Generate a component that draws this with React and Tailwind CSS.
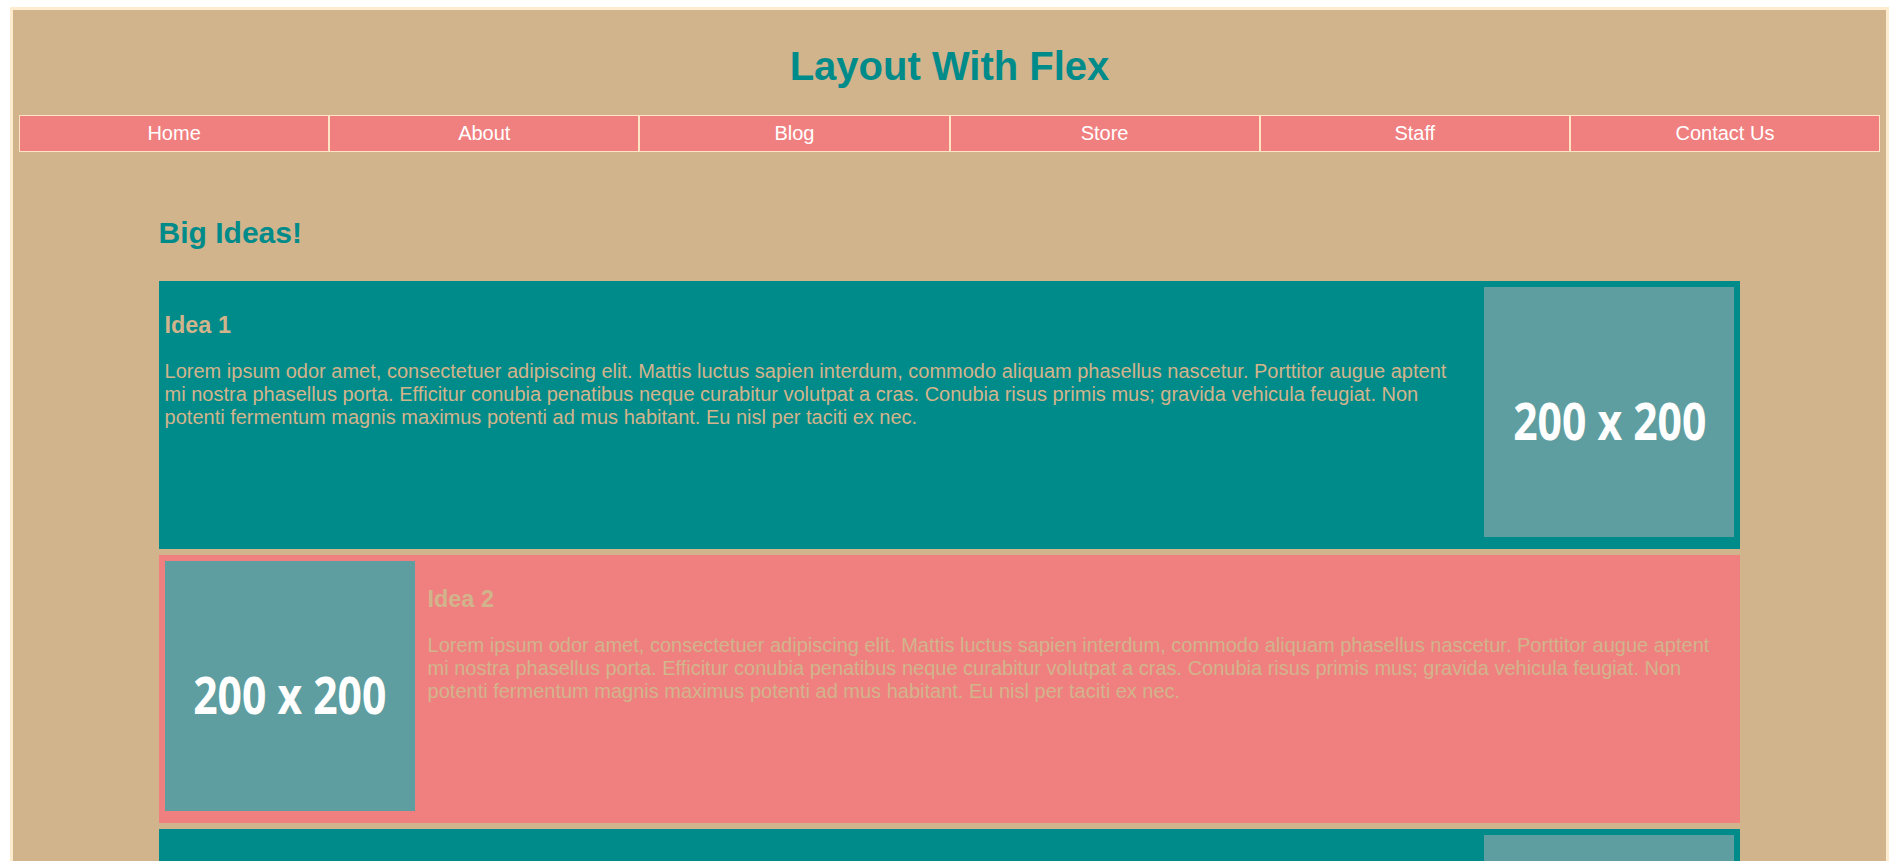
const NAV = ['Home', 'About', 'Blog', 'Store', 'Staff', 'Contact Us']

const LOREM =
  'Lorem ipsum odor amet, consectetuer adipiscing elit. Mattis luctus sapien interdum, commodo aliquam phasellus nascetur. Porttitor augue aptent mi nostra phasellus porta. Efficitur conubia penatibus neque curabitur volutpat a cras. Conubia risus primis mus; gravida vehicula feugiat. Non potenti fermentum magnis maximus potenti ad mus habitant. Eu nisl per taciti ex nec.'

const IDEAS = [
  { title: 'Idea 1', bg: 'bg-[#008b8b]', imageLeft: false },
  { title: 'Idea 2', bg: 'bg-[#f08080]', imageLeft: true },
  { title: 'Idea 3', bg: 'bg-[#008b8b]', imageLeft: false },
  { title: 'Idea 4', bg: 'bg-[#f08080]', imageLeft: true },
]

function Placeholder() {
  return (
    <div className="flex h-[250px] w-[250px] shrink-0 items-center justify-center bg-[#5f9ea0] pt-[16px] mb-[6px]">
      <span className="block scale-x-[0.82] whitespace-nowrap font-['Open_Sans',sans-serif] text-[52px] font-bold leading-none text-white">
        200 x 200
      </span>
    </div>
  )
}

function Idea({ title, bg, imageLeft }) {
  return (
    <div className={`flex items-start gap-[13px] p-[6px] ${bg}`}>
      {imageLeft && <Placeholder />}
      <div className="flex-1 text-[#d2b48c]">
        <h3 className="mt-[25px] text-[23.4px] font-bold leading-[27px]">{title}</h3>
        <p className="mt-[21px] text-[20px] leading-[23px]">{LOREM}</p>
      </div>
      {!imageLeft && <Placeholder />}
    </div>
  )
}

export default function App() {
  return (
    <div className="min-h-screen bg-white pt-[7px] font-['Liberation_Sans',Arial,sans-serif]">
      <div className="ml-[10px] w-[1879px] border-[3px] border-[#ffebcd] bg-[#d2b48c] p-[6px]">
        {/* Header */}
        <h1 className="mt-[27px] mb-[26px] text-center text-[40px] font-bold leading-[46px] text-[#008b8b]">
          Layout With Flex
        </h1>

        {/* Nav */}
        <nav className="flex">
          {NAV.map(item => (
            <a key={item} className="flex-1 border border-[#ffe4c4] bg-[#f08080] py-[6px] text-center text-[20px] leading-[23px] text-white">
              {item}
            </a>
          ))}
        </nav>

        {/* Main */}
        <section className="mx-auto w-[85%] pb-[40px]">
          <h2 className="mt-[64px] text-[30px] font-bold leading-[34px] text-[#008b8b]">Big Ideas!</h2>
          <div className="mt-[31px] flex flex-col gap-[6px]">
            {IDEAS.map(idea => (
              <Idea key={idea.title} {...idea} />
            ))}
          </div>
        </section>
      </div>
    </div>
  )
}
